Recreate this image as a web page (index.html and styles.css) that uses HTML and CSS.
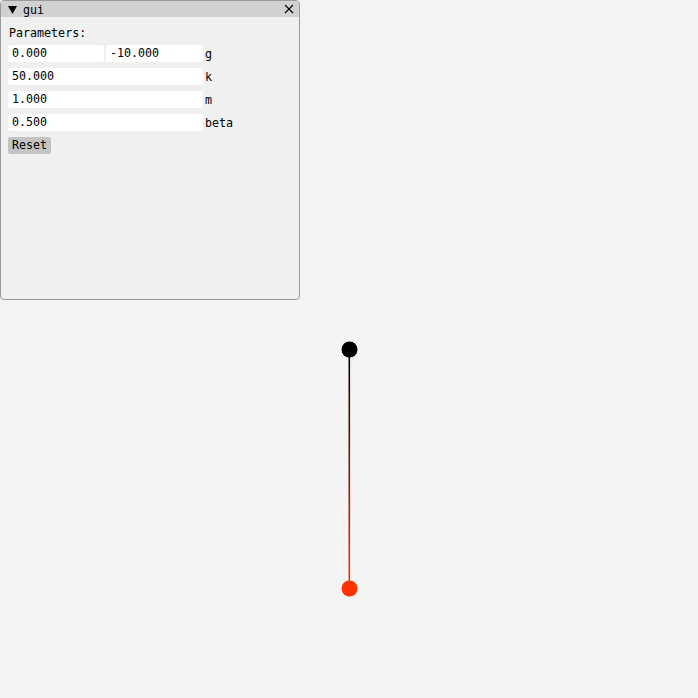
FILE: index.html
```html
<!DOCTYPE html>
<html>
<head>
<meta charset="utf-8">
<link rel="stylesheet" href="styles.css">
</head>
<body>
<svg class="scene" width="698" height="698" viewBox="0 0 698 698">
  <defs>
    <linearGradient id="rod" x1="0" y1="349" x2="0" y2="588" gradientUnits="userSpaceOnUse">
      <stop offset="0" stop-color="#000000"/>
      <stop offset="1" stop-color="#ff3300"/>
    </linearGradient>
  </defs>
  <rect x="348.5" y="349" width="1.6" height="239" fill="url(#rod)"/>
  <circle cx="349.5" cy="349.5" r="8" fill="#000"/>
  <circle cx="349.5" cy="588.5" r="8" fill="#ff3300"/>
</svg>
<div class="window">
  <div class="titlebar">
    <span class="arrow">
      <svg width="9" height="8" viewBox="0 0 9 8"><path d="M0 0 L9 0 L4.5 8 Z" fill="#000"/></svg>
    </span>
    <span class="title">gui</span>
    <span class="close">
      <svg width="10" height="10" viewBox="0 0 10 10"><path d="M1 1 L9 9 M9 1 L1 9" stroke="#000" stroke-width="1.1" fill="none"/></svg>
    </span>
  </div>
  <div class="content">
    <div class="text">Parameters:</div>
    <div class="row">
      <div class="field half">0.000</div>
      <div class="field half2">-10.000</div>
      <span class="label">g</span>
    </div>
    <div class="row">
      <div class="field full">50.000</div>
      <span class="label">k</span>
    </div>
    <div class="row">
      <div class="field full">1.000</div>
      <span class="label">m</span>
    </div>
    <div class="row">
      <div class="field full">0.500</div>
      <span class="label">beta</span>
    </div>
    <div class="row">
      <div class="button">Reset</div>
    </div>
  </div>
</div>
</body>
</html>
```
FILE: styles.css
```css
html, body {
  margin: 0;
  padding: 0;
  background: #f4f4f4;
  width: 698px;
  height: 698px;
  overflow: hidden;
}
body {
  font-family: "DejaVu Sans Mono", "Liberation Mono", monospace;
  font-size: 11.67px;
  color: #000;
}
.scene {
  position: absolute;
  left: 0;
  top: 0;
}
.window {
  position: absolute;
  left: 0;
  top: 0;
  width: 298px;
  height: 298px;
  border: 1px solid #9a9a9a;
  border-radius: 4px;
  background: #f0f0f0;
  overflow: hidden;
}
.titlebar {
  height: 16px;
  background: #d1d1d1;
  display: flex;
  align-items: center;
}
.arrow {
  display: flex;
  margin-left: 7px;
  margin-top: 1px;
}
.title {
  margin-left: 6px;
  line-height: 16px;
  padding-top: 1px;
}
.close {
  margin-left: auto;
  margin-right: 5px;
  display: flex;
  width: 10px;
  height: 10px;
}
.content {
  padding: 10px 0 0 7px;
  display: flex;
  flex-direction: column;
  gap: 6px;
}
.text {
  height: 13px;
  line-height: 13px;
  margin-bottom: -1px;
  padding-left: 1px;
}
.row {
  display: flex;
  align-items: center;
  height: 17px;
}
.field {
  background: #ffffff;
  height: 17px;
  line-height: 17px;
  border-radius: 2px;
  padding-left: 4px;
  box-sizing: border-box;
}
.half { width: 96px; }
.half2 { width: 97px; margin-left: 2px; }
.full { width: 195px; }
.label {
  margin-left: 2px;
  line-height: 17px;
  padding-top: 2px;
}
.button {
  background: #c4c4c4;
  height: 17px;
  line-height: 17px;
  border-radius: 2px;
  padding: 0 4px;
}
```
